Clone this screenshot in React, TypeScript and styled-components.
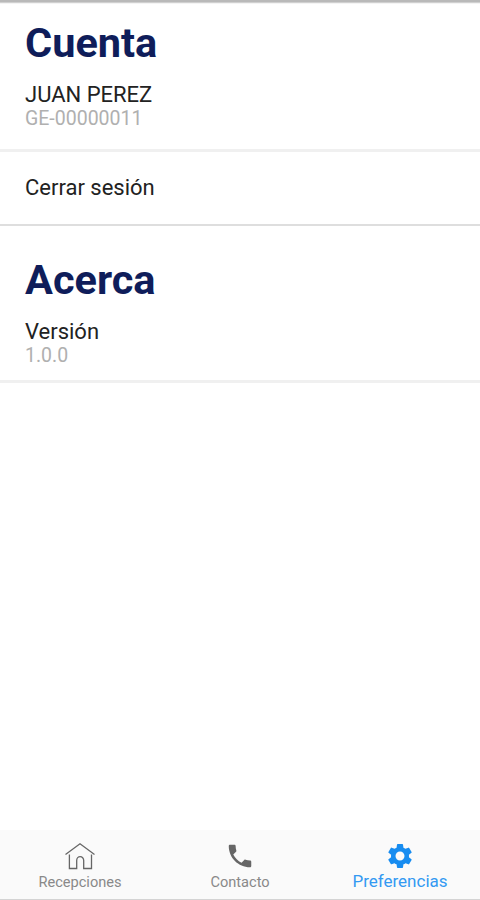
import React from "react";
import styled, { createGlobalStyle } from "styled-components";
import { MdPhone, MdSettings } from "react-icons/md";

const GlobalStyle = createGlobalStyle`
  * { box-sizing: border-box; }
  body { margin: 0; background: #fff; font-family: Roboto, sans-serif; }
`;

const Screen = styled.div`
  display: flex;
  flex-direction: column;
  width: 480px;
  height: 900px;
  background: #fff;
  border-top: 2px solid #b9b9b9;
  border-bottom: 1px solid #d4d4d4;
  overflow: hidden;
`;

const StatusEdge = styled.div`
  flex: none;
  height: 2px;
  background: linear-gradient(#d0d0d0 50%, #f4f4f4 50%);
`;

const Content = styled.main`
  flex: 1;
`;

const Heading = styled.h1<{ $top: number }>`
  margin: 0;
  padding: ${(p) => p.$top}px 25px 0;
  font-size: 41.5px;
  line-height: 48px;
  font-weight: 700;
  color: #0f1d5a;
`;

const Row = styled.div<{ $height: number; $top: number; $line: string; $thick: number }>`
  height: ${(p) => p.$height}px;
  padding: ${(p) => p.$top}px 25px 0;
  border-bottom: ${(p) => p.$thick}px solid ${(p) => p.$line};
`;

const Title = styled.div`
  font-size: 22px;
  line-height: 24px;
  color: #222;
`;

const Detail = styled.div`
  font-size: 19.5px;
  line-height: 24px;
  color: #b0b0b0;
`;

const TabBar = styled.nav`
  flex: none;
  display: grid;
  grid-template-columns: repeat(3, 1fr);
  height: 69px;
  background: #fafafa;
`;

const Tab = styled.div<{ $active?: boolean }>`
  display: flex;
  flex-direction: column;
  align-items: center;
  padding-top: 11px;
  color: ${(p) => (p.$active ? "#178cf0" : "#666")};
  svg { flex: none; display: block; }
`;

const TabLabel = styled.span<{ $active?: boolean }>`
  margin-top: ${(p) => (p.$active ? 0 : 1)}px;
  font-size: ${(p) => (p.$active ? 17 : 14.6)}px;
  line-height: 20px;
  color: ${(p) => (p.$active ? "#3399f2" : "#898989")};
`;

const HouseIcon = () => (
  <svg width="32" height="30" viewBox="0 -1 32 30" fill="none" stroke="currentColor" strokeWidth="1.3">
    <path d="M1.5 12.5 16 1.8l14.5 10.7" />
    <path d="M5.4 12.5v14h7.3v-8a3.5 3.8 0 0 1 7 0v8H27.500v-14" />
  </svg>
);

export default function App() {
  return (
    <>
      <GlobalStyle />
      <Screen>
        <StatusEdge />
        <Content>
          <Heading $top={15}>Cuenta</Heading>
          <Row $height={85} $top={16} $line="#f0f0f0" $thick={3}>
            <Title>JUAN PEREZ</Title>
            <Detail>GE-00000011</Detail>
          </Row>
          <Row $height={74} $top={24} $line="#dedede" $thick={2}>
            <Title>Cerrar sesión</Title>
          </Row>
          <Heading $top={30}>Acerca</Heading>
          <Row $height={79} $top={16} $line="#f0f0f0" $thick={3}>
            <Title>Versión</Title>
            <Detail>1.0.0</Detail>
          </Row>
        </Content>
        <TabBar>
          <Tab>
            <HouseIcon />
            <TabLabel>Recepciones</TabLabel>
          </Tab>
          <Tab>
            <MdPhone size={30} />
            <TabLabel>Contacto</TabLabel>
          </Tab>
          <Tab $active>
            <MdSettings size={30} />
            <TabLabel $active>Preferencias</TabLabel>
          </Tab>
        </TabBar>
      </Screen>
    </>
  );
}
